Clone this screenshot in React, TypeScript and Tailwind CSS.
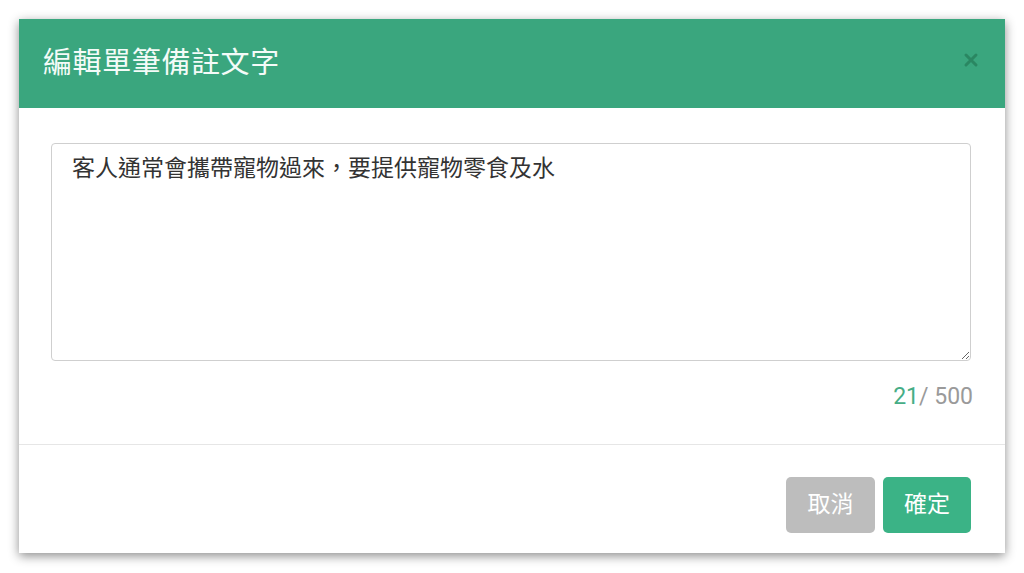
import React from "react";

export default function App() {
  const text = "客人通常會攜帶寵物過來，要提供寵物零食及水";
  return (
    <div
      className="w-[1024px] h-[573px] bg-white pt-[19px] pl-[19px]"
      style={{ fontFamily: "Roboto, 'Noto Sans CJK TC', sans-serif" }}
    >
      <div className="w-[986px] h-[534px] bg-white flex flex-col shadow-[0_3px_10px_rgba(0,0,0,0.45)]">
        <div className="h-[89px] bg-[#3aa67e] flex items-center justify-between pl-[24px] pr-[26px]">
          <div className="text-[29px] text-[#f4fbf8] leading-none tracking-[0.6px] mt-[-1px]">編輯單筆備註文字</div>
          <svg width="16" height="16" viewBox="0 0 16 16" className="mt-[-7px]">
            <path d="M3 3 L13 13 M13 3 L3 13" stroke="#2a8762" strokeWidth="3" strokeLinecap="round" />
          </svg>
        </div>
        <div className="h-[337px] px-[32px] pt-[35px] flex flex-col border-b border-[#e6e6e6]">
          <textarea
            defaultValue={text}
            className="w-[920px] h-[218px] border border-[#cfcfcf] rounded-[4px] px-[20px] py-[10px] text-[23px] leading-[30px] text-[#333] outline-none resize-y"
            style={{ fontFamily: "Roboto, 'Noto Sans CJK TC', sans-serif" }}
          />
          <div className="mt-[22px] text-right text-[23px] leading-[28px]">
            <span className="text-[#46ad86]">21</span>
            <span className="text-[#9a9a9a]">/ 500</span>
          </div>
        </div>
        <div className="flex justify-end gap-[8px] px-[34px] pt-[32px]">
          <button className="w-[89px] h-[56px] rounded-[5px] bg-[#bdbdbd] text-white text-[23px]">取消</button>
          <button className="w-[88px] h-[56px] rounded-[5px] bg-[#3bb386] text-white text-[23px]">確定</button>
        </div>
      </div>
    </div>
  );
}
